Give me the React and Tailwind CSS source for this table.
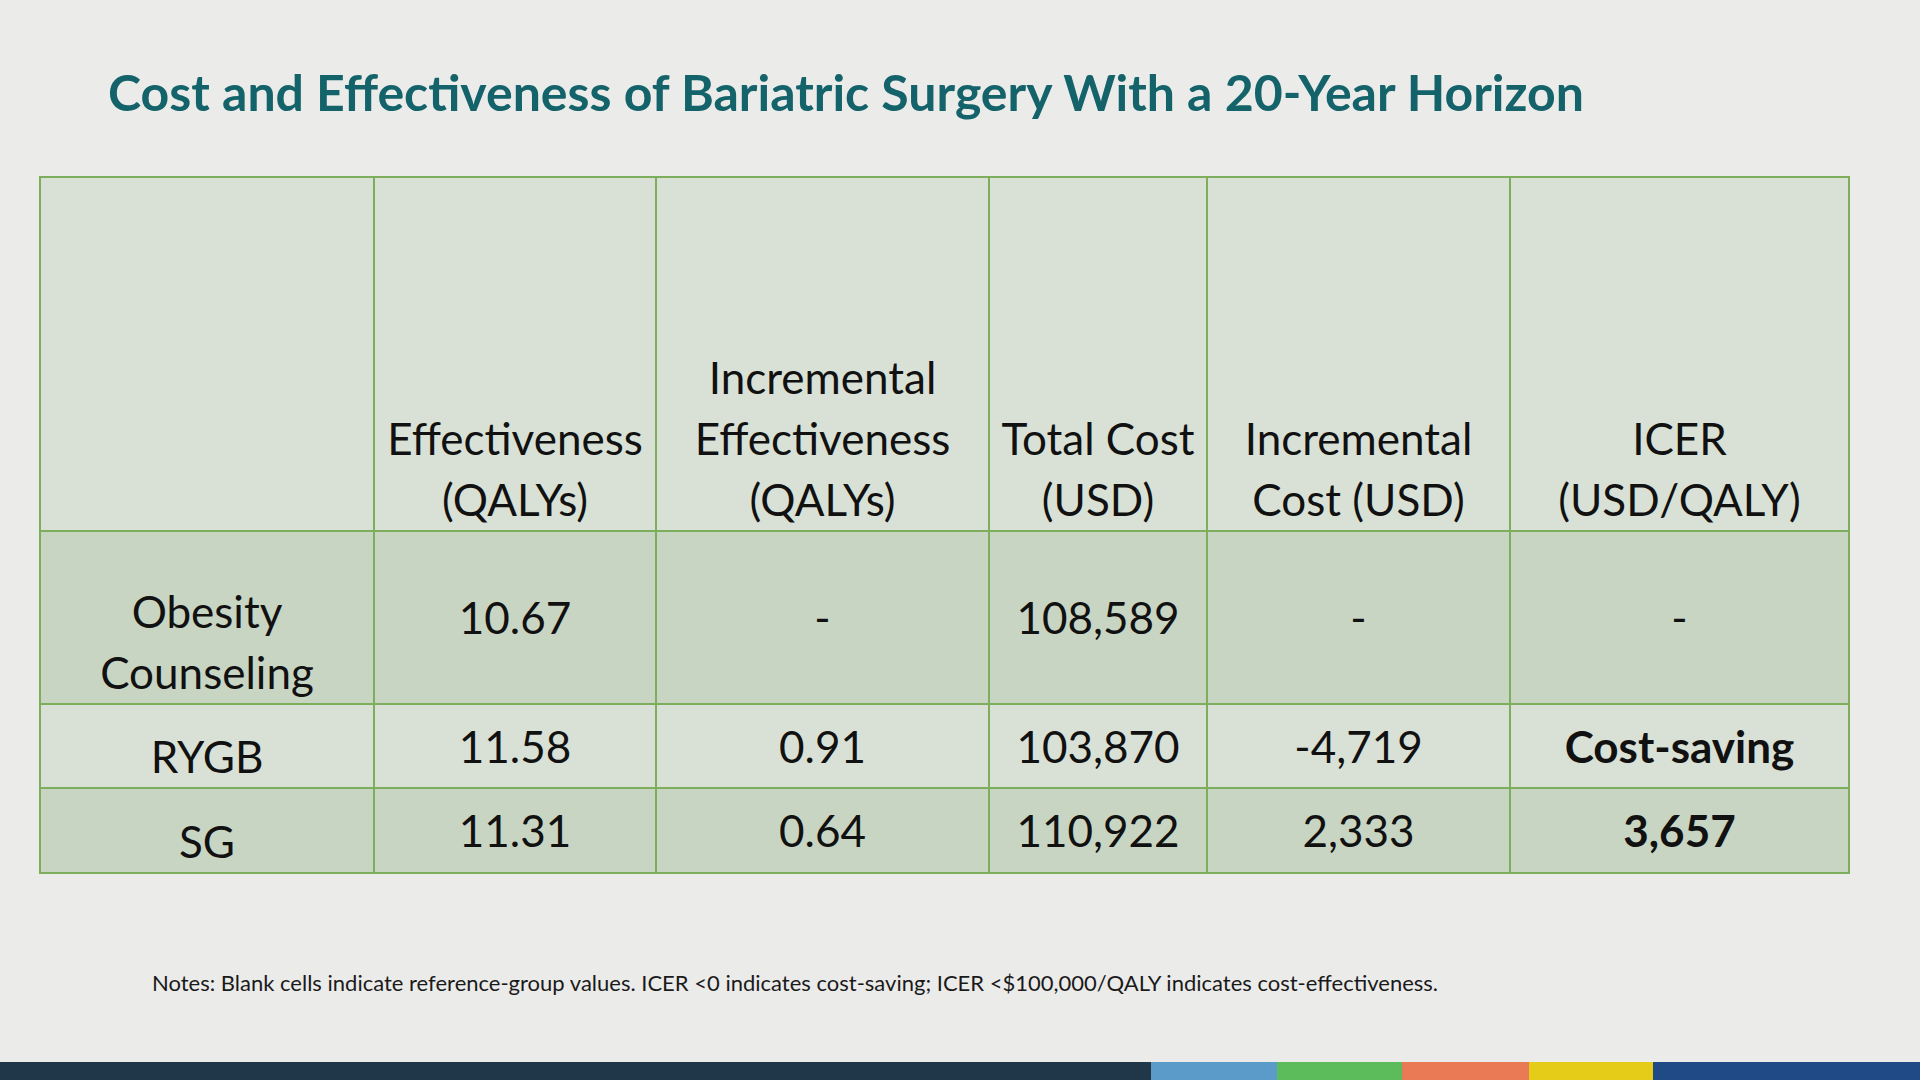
import React from "react";

const columns = [
  { key: "label", width: "w-[334px]", head: [] },
  { key: "eff", width: "w-[282px]", head: ["Effectiveness", "(QALYs)"] },
  { key: "incEff", width: "w-[333px]", head: ["Incremental", "Effectiveness", "(QALYs)"] },
  { key: "cost", width: "w-[218px]", head: ["Total Cost", "(USD)"] },
  { key: "incCost", width: "w-[303px]", head: ["Incremental", "Cost (USD)"] },
  { key: "icer", width: "w-[339px]", head: ["ICER", "(USD/QALY)"] },
];

const rows = [
  {
    id: "oc",
    height: "h-[173px]",
    fill: "bg-[#c9d5c3]",
    label: ["Obesity", "Counseling"],
    values: ["10.67", "-", "108,589", "-", "-"],
  },
  {
    id: "rygb",
    height: "h-[84px]",
    fill: "bg-[#d9e1d6]",
    label: ["RYGB"],
    values: ["11.58", "0.91", "103,870", "-4,719", "Cost-saving"],
  },
  {
    id: "sg",
    height: "h-[85px]",
    fill: "bg-[#c9d5c3]",
    label: ["SG"],
    values: ["11.31", "0.64", "110,922", "2,333", "3,657"],
  },
];

const cell = "border-2 border-[#7dae5c] text-center px-1";

export default function App() {
  return (
    <div className="w-[1920px] h-[1080px] bg-[#ebebea] flex flex-col font-['Lato',sans-serif] text-[#111]">
      <h1 className="pl-[108px] pt-[60px] text-[50px] leading-[64px] font-bold text-[#15636a]">
        Cost and Effectiveness of Bariatric Surgery With a 20-Year Horizon
      </h1>

      <div className="pl-[39px] pt-[52px]">
        <table className="border-collapse table-fixed w-[1809px] text-[44px] leading-[61px]">
          <thead>
            <tr className="h-[354px] bg-[#d9e1d6]">
              {columns.map((c) => (
                <th key={c.key} className={`${cell} ${c.width} font-normal align-bottom pb-0`}>
                  {c.head.map((line) => (
                    <div key={line}>{line}</div>
                  ))}
                </th>
              ))}
            </tr>
          </thead>
          <tbody>
            {rows.map((r) => (
              <tr key={r.id} className={`${r.height} ${r.fill}`}>
                <td className={`${cell} align-bottom`}>
                  {r.label.map((line) => (
                    <div key={line}>{line}</div>
                  ))}
                </td>
                {r.values.map((v, i) => (
                  <td key={i} className={`${cell} align-middle ${i === 4 && r.id !== "oc" ? "font-bold" : ""}`}>
                    {v}
                  </td>
                ))}
              </tr>
            ))}
          </tbody>
        </table>
      </div>

      <p className="pl-[152px] mt-[95px] text-[22px] leading-[28px] text-[#1a1a1a]">
        Notes: Blank cells indicate reference-group values. ICER &lt;0 indicates cost-saving; ICER &lt;$100,000/QALY
        indicates cost-effectiveness.
      </p>

      <div className="mt-auto h-[18px] flex">
        <div className="w-[1151px] bg-[#1f3748]" />
        <div className="w-[126px] bg-[#5a9bc9]" />
        <div className="w-[125px] bg-[#5cbb5a]" />
        <div className="w-[127px] bg-[#ea7a55]" />
        <div className="w-[124px] bg-[#e5cc18]" />
        <div className="flex-1 bg-[#1f4a85]" />
      </div>
    </div>
  );
}
